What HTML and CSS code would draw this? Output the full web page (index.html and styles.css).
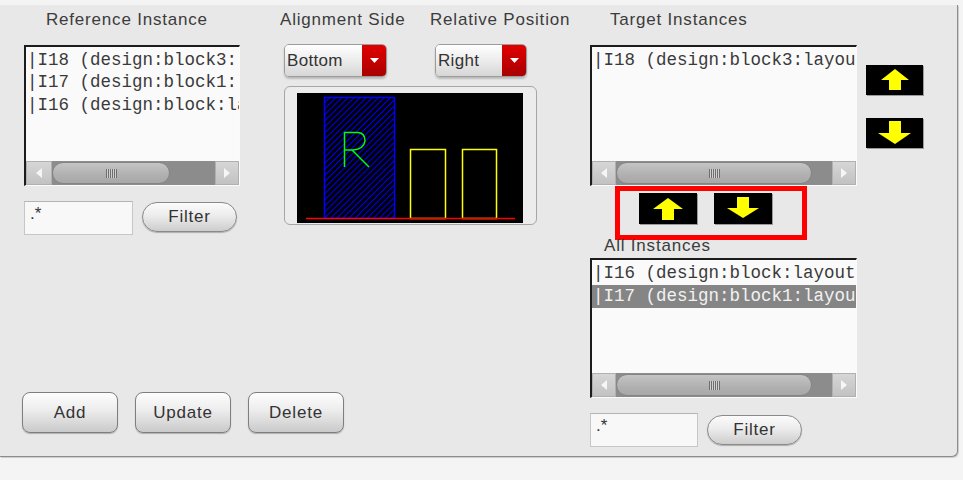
FILE: index.html
```html
<!DOCTYPE html>
<html>
<head>
<meta charset="utf-8">
<link rel="stylesheet" href="styles.css">
</head>
<body>
<div class="panel">
  <div class="leftside">
    <div class="top">
      <div class="refcol">
        <div class="label ref-label">Reference Instance</div>
        <div class="list list-ref">
          <div class="rows">
            <div class="row">|I18 (design:block3:layout)</div>
            <div class="row">|I17 (design:block1:layout)</div>
            <div class="row">|I16 (design:block:layout)</div>
          </div>
          <div class="sb">
            <div class="sb-btn"><svg width="8" height="10" viewBox="0 0 8 10"><polygon points="7,0 7,10 1,5" fill="#f6f6f6"/></svg></div>
            <div class="sb-track"><div class="sb-thumb" style="width:118px"><span class="grip"></span></div></div>
            <div class="sb-btn"><svg width="8" height="10" viewBox="0 0 8 10"><polygon points="1,0 1,10 7,5" fill="#f6f6f6"/></svg></div>
          </div>
        </div>
        <div class="filter-row">
          <div class="field">.*</div>
          <div class="pill">Filter</div>
        </div>
      </div>
      <div class="middle">
        <div class="label lbl-side">Alignment Side</div>
        <div class="label lbl-pos">Relative Position</div>
        <div class="select sel-side">
          <span class="sel-text">Bottom</span>
          <span class="sel-btn"><svg width="9" height="5" viewBox="0 0 9 5"><polygon points="0,0 9,0 4.5,5" fill="#fff"/></svg></span>
        </div>
        <div class="select sel-pos">
          <span class="sel-text">Right</span>
          <span class="sel-btn"><svg width="9" height="5" viewBox="0 0 9 5"><polygon points="0,0 9,0 4.5,5" fill="#fff"/></svg></span>
        </div>
        <div class="preview">
          <svg class="canvas" width="226" height="130" viewBox="0 0 226 130">
            <defs>
              <pattern id="hatch" width="4.3" height="10" patternUnits="userSpaceOnUse" patternTransform="rotate(45)">
                <line x1="0.5" y1="0" x2="0.5" y2="10" stroke="#0000ff" stroke-width="1.1"/>
              </pattern>
            </defs>
            <rect x="0" y="0" width="226" height="130" fill="#000"/>
            <rect x="27.5" y="4.5" width="70" height="121" fill="url(#hatch)" stroke="#0000ff" stroke-width="1.5"/>
            <path d="M47.5 74 V39.5 H61 Q68 40 68 48 Q67 56 56 57 H47.5 M55 57 L72 74" fill="none" stroke="#00ff00" stroke-width="1.5"/>
            <rect x="113.5" y="56.5" width="35" height="69" fill="none" stroke="#ffff00" stroke-width="1.5"/>
            <rect x="165.5" y="56.5" width="34" height="69" fill="none" stroke="#ffff00" stroke-width="1.5"/>
            <line x1="9" y1="125.5" x2="218" y2="125.5" stroke="#ff0000" stroke-width="1.5"/>
          </svg>
        </div>
      </div>
    </div>
    <div class="actions">
      <div class="btn">Add</div>
      <div class="btn">Update</div>
      <div class="btn">Delete</div>
    </div>
  </div>

  <div class="target">
    <div class="label tgt-label">Target Instances</div>
    <div class="list list-tgt">
      <div class="rows">
        <div class="row">|I18 (design:block3:layout)</div>
      </div>
      <div class="sb">
        <div class="sb-btn"><svg width="8" height="10" viewBox="0 0 8 10"><polygon points="7,0 7,10 1,5" fill="#f6f6f6"/></svg></div>
        <div class="sb-track"><div class="sb-thumb" style="width:196px"><span class="grip"></span></div></div>
        <div class="sb-btn"><svg width="8" height="10" viewBox="0 0 8 10"><polygon points="1,0 1,10 7,5" fill="#f6f6f6"/></svg></div>
      </div>
    </div>
    <div class="move-box">
      <div class="arrow"><svg width="58" height="31" viewBox="0 0 58 31"><polygon points="29,5 44,16 35,16 35,27 23,27 23,16 14,16" fill="#ffff00"/></svg></div>
      <div class="arrow"><svg width="58" height="31" viewBox="0 0 58 31"><polygon points="23,4 35,4 35,15 45,15 29,25 13,15 23,15" fill="#ffff00"/></svg></div>
    </div>
    <div class="label all-label">All Instances</div>
    <div class="list list-all">
      <div class="rows">
        <div class="row">|I16 (design:block:layout)</div>
        <div class="row selected">|I17 (design:block1:layout)</div>
      </div>
      <div class="sb">
        <div class="sb-btn"><svg width="8" height="10" viewBox="0 0 8 10"><polygon points="7,0 7,10 1,5" fill="#f6f6f6"/></svg></div>
        <div class="sb-track"><div class="sb-thumb" style="width:196px"><span class="grip"></span></div></div>
        <div class="sb-btn"><svg width="8" height="10" viewBox="0 0 8 10"><polygon points="1,0 1,10 7,5" fill="#f6f6f6"/></svg></div>
      </div>
    </div>
    <div class="filter-row">
      <div class="field">.*</div>
      <div class="pill pill-low">Filter</div>
    </div>
  </div>

  <div class="side-arrows">
    <div class="arrow side"><svg width="57" height="30" viewBox="0 0 57 30"><polygon points="29,4 43,15 35,15 35,25 23,25 23,15 15,15" fill="#ffff00"/></svg></div>
    <div class="arrow side"><svg width="57" height="30" viewBox="0 0 57 30"><polygon points="23,3 35,3 35,15 45,15 29,26 12,15 23,15" fill="#ffff00"/></svg></div>
  </div>
</div>
</body>
</html>
```

FILE: styles.css
```css
html, body {
  margin: 0;
  padding: 0;
}
body {
  background: #f4f4f4;
  width: 963px;
  height: 480px;
  overflow: hidden;
  font-family: "Liberation Sans", Arial, sans-serif;
  color: #3a3a3a;
}
.panel {
  margin-top: 5px;
  width: 958px;
  height: 452px;
  box-sizing: border-box;
  background: #e8e8e8;
  border-right: 1px solid #8c8c8c;
  border-bottom: 1px solid #8c8c8c;
  border-bottom-right-radius: 6px;
  box-shadow: 1px 1px 0 #cfcfcf;
  padding: 4.5px 0 0 21px;
  display: flex;
  align-items: flex-start;
}
.label {
  font-size: 17px;
  line-height: 20px;
  letter-spacing: 0.8px;
  white-space: nowrap;
  color: #3c3c3c;
}

/* left side */
.leftside {
  width: 569px;
  flex: none;
  height: 446px;
  box-sizing: border-box;
  padding-bottom: 23px;
  display: flex;
  flex-direction: column;
}
.top {
  display: flex;
  align-items: flex-start;
}
.refcol {
  width: 216px;
  margin-left: 3px;
  flex: none;
}
.ref-label {
  padding-left: 22px;
}

/* lists */
.list {
  margin-top: 15.5px;
  box-sizing: border-box;
  border-style: solid;
  border-width: 2px 1px 1px 2px;
  border-color: #1c1c1c #fbfbfb #fbfbfb #1c1c1c;
  background: #fafafa;
  display: flex;
  flex-direction: column;
}
.list-ref { width: 216px; height: 141px; }
.list-tgt { width: 267px; height: 141px; }
.list-all { width: 267px; height: 140px; margin-top: 2px; }
.rows {
  flex: 1;
  overflow: hidden;
  padding-top: 1.5px;
}
.row {
  font-family: "Liberation Mono", "Courier New", monospace;
  font-size: 17.5px;
  line-height: 22.5px;
  height: 22.5px;
  padding-left: 1px;
  white-space: nowrap;
  overflow: hidden;
  color: #3a3a3a;
}
.list-all .row { line-height: 23px; height: 23px; }
.row.selected {
  background: #858585;
  color: #f2f2f2;
}

/* scrollbar */
.sb {
  height: 24px;
  flex: none;
  display: flex;
  background: #8c8c8c;
}
.sb-btn {
  width: 24px;
  flex: none;
  box-sizing: border-box;
  background: linear-gradient(#d6d6d6, #c2c2c2);
  border: 1px solid #b0b0b0;
  display: flex;
  align-items: center;
  justify-content: center;
}
.list-ref .sb-btn:first-child { width: 26px; }
.sb-track {
  flex: 1;
  display: flex;
  align-items: center;
  background: #8c8c8c;
}
.sb-thumb {
  height: 22px;
  box-sizing: border-box;
  border-radius: 11px;
  border: 1px solid #858585;
  background: linear-gradient(#c4c4c4, #b0b0b0 60%, #a8a8a8);
  display: flex;
  align-items: center;
  justify-content: center;
}
.grip {
  width: 11px;
  height: 9px;
  background: repeating-linear-gradient(90deg, #6e6e6e 0 1px, #d0d0d0 1px 2px, transparent 2px 2px);
}

/* filter rows */
.filter-row {
  margin-top: 15px;
  display: flex;
  align-items: flex-start;
}
.field {
  width: 109px;
  height: 34px;
  box-sizing: border-box;
  background: #f8f8f8;
  border: 1px solid #c6c6c6;
  border-top-color: #b4b4b4;
  font-size: 17px;
  line-height: 24px;
  padding-left: 5px;
  color: #333;
}
.target .field { width: 108px; }
.pill {
  margin-left: 9px;
  margin-top: 1px;
  width: 95px;
  height: 30px;
  box-sizing: border-box;
  border-radius: 15px;
  border: 1px solid #8a8a8a;
  background: linear-gradient(#fbfbfb, #ececec 45%, #cdcdcd);
  box-shadow: 0 1px 1px rgba(0, 0, 0, 0.25);
  font-size: 17px;
  letter-spacing: 0.8px;
  line-height: 28px;
  text-align: center;
  color: #333;
}
.pill-low { margin-top: 2px; margin-left: 9px; }

/* middle */
.middle {
  margin-left: 40px;
  display: grid;
  grid-template-columns: 150px auto;
  align-items: start;
}
.select {
  margin-top: 14px;
  height: 33px;
  box-sizing: border-box;
  display: flex;
  border: 1px solid #9c9c9c;
  border-radius: 5px;
  overflow: hidden;
  box-shadow: 0 2px 2px rgba(0, 0, 0, 0.2);
}
.sel-side { width: 103px; margin-left: 4px; }
.sel-pos { width: 92px; margin-left: 5px; }
.sel-text {
  flex: 1;
  background: linear-gradient(#ffffff, #ececec 50%, #d6d6d6);
  font-size: 17px;
  line-height: 31px;
  letter-spacing: 0.3px;
  padding-left: 2px;
  color: #333;
}
.sel-btn {
  width: 24px;
  flex: none;
  background: linear-gradient(#e00000, #c00000 60%, #a80000);
  display: flex;
  align-items: center;
  justify-content: center;
}
.preview {
  grid-column: 1 / span 2;
  margin-left: 4px;
  margin-top: 9px;
  width: 253px;
  height: 139px;
  box-sizing: border-box;
  border: 1px solid #a6a6a6;
  border-radius: 6px;
  background: #ececec;
  padding: 6px 0 0 12px;
}
.canvas { display: block; }

/* actions */
.actions {
  margin-top: auto;
  display: flex;
  gap: 17px;
  padding-left: 1px;
}
.btn {
  width: 96px;
  height: 41px;
  box-sizing: border-box;
  border-radius: 8px;
  border: 1px solid #7e7e7e;
  background: linear-gradient(#fdfdfd, #ececec 45%, #cacaca);
  box-shadow: 0 1px 1px rgba(0, 0, 0, 0.25);
  font-size: 17px;
  letter-spacing: 0.8px;
  line-height: 39px;
  text-align: center;
  color: #333;
}

/* target column */
.target {
  width: 267px;
  flex: none;
}
.tgt-label { padding-left: 20px; }
.all-label {
  margin-top: -4px;
  padding-left: 14px;
}
.move-box {
  margin-left: 25px;
  width: 192px;
  height: 54px;
  box-sizing: border-box;
  border: 5px solid #ff0000;
  display: flex;
  gap: 17px;
  padding: 2px 0 0 19px;
}
.arrow {
  width: 58px;
  height: 31px;
  background: #000;
  box-shadow: 1px 1px 0 #9a9a9a;
}
.arrow svg { display: block; }

.side-arrows {
  margin-left: 9px;
  margin-top: 55.5px;
  display: flex;
  flex-direction: column;
  gap: 23px;
}
.arrow.side {
  width: 57px;
  height: 30px;
}
```
